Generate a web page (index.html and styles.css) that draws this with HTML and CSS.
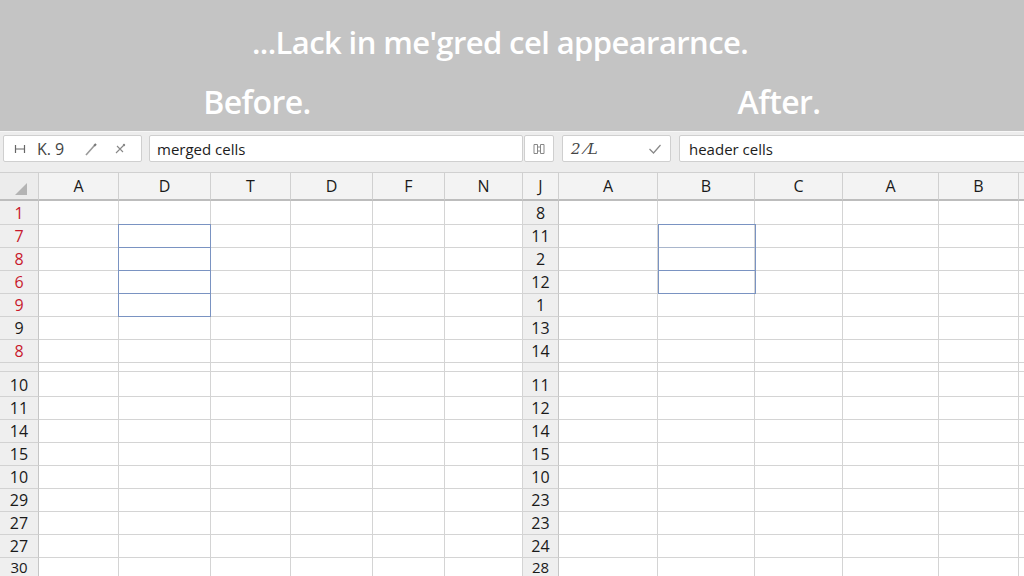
FILE: index.html
```html
<!DOCTYPE html>
<html>
<head>
<meta charset="utf-8">
<link rel="stylesheet" href="styles.css">
</head>
<body>
<div class="banner">
  <div class="title">...Lack in me'gred cel appeararnce.</div>
  <div class="labels"><span class="lbl before">Before.</span><span class="lbl after">After.</span></div>
</div>
<div class="toolbar">
  <div class="box b1">
    <svg class="ic" width="12" height="12" viewBox="0 0 12 12"><path d="M1.5 2v8M10.5 2v8M1.5 6h9" stroke="#666" stroke-width="1.2" fill="none"/></svg>
    <span class="glyph">K.</span><span class="glyph g9">9</span>
    <svg class="ic pen" width="14" height="14" viewBox="0 0 14 14"><path d="M2 13L10 4" stroke="#999" stroke-width="1.6" fill="none"/><path d="M10 4l2-2" stroke="#777" stroke-width="2.2"/></svg>
    <svg class="ic x" width="12" height="12" viewBox="0 0 12 12"><path d="M2 10L10 2M3 3l6 6" stroke="#888" stroke-width="1.1" fill="none"/><circle cx="10" cy="2" r="1.2" fill="#888"/></svg>
  </div>
  <div class="box b2">merged cells</div>
  <div class="box b3">
    <svg width="14" height="14" viewBox="0 0 14 14"><path d="M2 2.5h3.5v9H2M12 2.5H8.5v9H12M5.5 5h3M5.5 9h3M2 2.5v9M12 2.5v9" stroke="#888" stroke-width="1" fill="none"/></svg>
  </div>
  <div class="box b4">
    <span class="cur">2 ⁄L</span>
    <svg class="chk" width="14" height="12" viewBox="0 0 14 12"><path d="M1.5 6l4 4L12.5 2" stroke="#888" stroke-width="1.2" fill="none"/></svg>
  </div>
  <div class="box b5">header cells</div>
</div>
<div class="sheets">
  <div class="sheet left">
    <div class="ch corner"><svg width="14" height="14" viewBox="0 0 14 14"><path d="M13 1V13H1Z" fill="#b4b4b4"/></svg></div><div class="ch">A</div><div class="ch">D</div><div class="ch">T</div><div class="ch">D</div><div class="ch">F</div><div class="ch">N</div>
    <div class="rh red">1</div><div></div><div></div><div></div><div></div><div></div><div></div>
    <div class="rh red">7</div><div></div><div></div><div></div><div></div><div></div><div></div>
    <div class="rh red">8</div><div></div><div></div><div></div><div></div><div></div><div></div>
    <div class="rh red">6</div><div></div><div></div><div></div><div></div><div></div><div></div>
    <div class="rh red">9</div><div></div><div></div><div></div><div></div><div></div><div></div>
    <div class="rh">9</div><div></div><div></div><div></div><div></div><div></div><div></div>
    <div class="rh red">8</div><div></div><div></div><div></div><div></div><div></div><div></div>
    <div class="rh"></div><div></div><div></div><div></div><div></div><div></div><div></div>
    <div class="rh tall">10</div><div></div><div></div><div></div><div></div><div></div><div></div>
    <div class="rh">11</div><div></div><div></div><div></div><div></div><div></div><div></div>
    <div class="rh">14</div><div></div><div></div><div></div><div></div><div></div><div></div>
    <div class="rh">15</div><div></div><div></div><div></div><div></div><div></div><div></div>
    <div class="rh">10</div><div></div><div></div><div></div><div></div><div></div><div></div>
    <div class="rh">29</div><div></div><div></div><div></div><div></div><div></div><div></div>
    <div class="rh">27</div><div></div><div></div><div></div><div></div><div></div><div></div>
    <div class="rh">27</div><div></div><div></div><div></div><div></div><div></div><div></div>
    <div class="rh last">30</div><div></div><div></div><div></div><div></div><div></div><div></div>
    <div class="merge m-left"><div></div><div></div><div></div><div></div></div>
  </div>
  <div class="sheet right">
    <div class="ch rhc">J</div><div class="ch">A</div><div class="ch">B</div><div class="ch">C</div><div class="ch">A</div><div class="ch">B</div><div class="ch"></div>
    <div class="rh">8</div><div></div><div></div><div></div><div></div><div></div><div></div>
    <div class="rh">11</div><div></div><div></div><div></div><div></div><div></div><div></div>
    <div class="rh">2</div><div></div><div></div><div></div><div></div><div></div><div></div>
    <div class="rh">12</div><div></div><div></div><div></div><div></div><div></div><div></div>
    <div class="rh">1</div><div></div><div></div><div></div><div></div><div></div><div></div>
    <div class="rh">13</div><div></div><div></div><div></div><div></div><div></div><div></div>
    <div class="rh">14</div><div></div><div></div><div></div><div></div><div></div><div></div>
    <div class="rh"></div><div></div><div></div><div></div><div></div><div></div><div></div>
    <div class="rh tall">11</div><div></div><div></div><div></div><div></div><div></div><div></div>
    <div class="rh">12</div><div></div><div></div><div></div><div></div><div></div><div></div>
    <div class="rh">14</div><div></div><div></div><div></div><div></div><div></div><div></div>
    <div class="rh">15</div><div></div><div></div><div></div><div></div><div></div><div></div>
    <div class="rh">10</div><div></div><div></div><div></div><div></div><div></div><div></div>
    <div class="rh">23</div><div></div><div></div><div></div><div></div><div></div><div></div>
    <div class="rh">23</div><div></div><div></div><div></div><div></div><div></div><div></div>
    <div class="rh">24</div><div></div><div></div><div></div><div></div><div></div><div></div>
    <div class="rh last">28</div><div></div><div></div><div></div><div></div><div></div><div></div>
    <div class="merge m-right"><div></div><div></div><div></div></div>
  </div>
</div>
</body>
</html>
```
FILE: styles.css
```css
html, body {
  margin: 0;
  padding: 0;
}
body {
  width: 1024px;
  height: 576px;
  overflow: hidden;
  background: #ffffff;
  font-family: "Open Sans", "Liberation Sans", sans-serif;
  color: #222;
}
.banner {
  height: 131px;
  background: #c4c4c4;
  color: #ffffff;
  box-sizing: border-box;
  padding-top: 22px;
}
.title {
  text-align: center;
  font-weight: 600;
  font-size: 31px;
  line-height: 40px;
  letter-spacing: -0.6px;
  padding-right: 24px;
}
.labels {
  display: flex;
  margin-top: 20px;
}
.lbl {
  flex: 1;
  text-align: center;
  font-weight: 600;
  font-size: 32px;
  line-height: 40px;
  letter-spacing: -0.6px;
}
.before {
  padding-left: 12px;
}
.after {
  padding-left: 32px;
}
.toolbar {
  height: 41px;
  box-sizing: border-box;
  background: #ededed;
  border-top: 1px solid #f7f7f7;
  padding: 3px 0 0 3px;
  display: flex;
  align-items: flex-start;
}
.box {
  height: 27px;
  box-sizing: border-box;
  background: #fff;
  border: 1px solid #cfcfcf;
  border-radius: 2px;
  display: flex;
  align-items: center;
  font-size: 15px;
  color: #1c1c1c;
  flex-shrink: 0;
}
.b1 {
  width: 139px;
  padding-left: 10px;
  color: #555;
}
.b1 .glyph {
  font-size: 16px;
  color: #444;
}
.b1 .ic {
  margin-right: 11px;
}
.b1 .g9 {
  margin-left: 4px;
  margin-right: 20px;
}
.b1 .pen {
  margin-right: 16px;
}
.b2 {
  margin-left: 7px;
  width: 374px;
  padding-left: 7px;
}
.b3 {
  margin-left: 1px;
  width: 30px;
  justify-content: center;
}
.b4 {
  margin-left: 8px;
  width: 109px;
  padding-left: 8px;
  justify-content: space-between;
  padding-right: 8px;
}
.cur {
  font-family: "DejaVu Serif", serif;
  font-style: italic;
  font-size: 15px;
  color: #444;
}
.b5 {
  margin-left: 8px;
  width: 360px;
  padding-left: 9px;
}
.sheets {
  display: flex;
}
.sheet {
  position: relative;
  display: grid;
  grid-template-rows: 29px 24px repeat(6, 23px) 9px 25px repeat(8, 23px);
}
.left {
  width: 523px;
  grid-template-columns: 39px 80px 92px 80px 82px 72px 78px;
}
.right {
  width: 520px;
  grid-template-columns: 36px 99px 97px 88px 96px 80px 24px;
}
.sheet > div {
  box-sizing: border-box;
  border-right: 1px solid #d4d4d4;
  border-bottom: 1px solid #d4d4d4;
}
.sheet > .ch {
  background: #f3f3f3;
  border-top: 1px solid #d0d0d0;
  border-bottom: 2px solid #bdbdbd;
  border-right: 1px solid #d0d0d0;
  font-size: 16px;
  display: flex;
  align-items: center;
  justify-content: center;
  color: #1a1a1a;
}
.corner {
  justify-content: flex-end !important;
  align-items: flex-end !important;
  padding: 0 10px 3px 0;
  background: #ececec !important;
}
.sheet > .rh {
  background: #efefef;
  border-right: 1px solid #c6c6c6;
  border-bottom: 1px solid #d2d2d2;
  font-size: 16px;
  display: flex;
  align-items: center;
  justify-content: center;
  color: #1a1a1a;
}
.sheet > .tall {
  padding-top: 2px;
}
.sheet > .last {
  align-items: flex-start;
  line-height: 19px;
  font-size: 15px;
}
.sheet > .red {
  color: #c8192c;
}
.sheet > .merge {
  position: absolute;
  border: 1px solid #7a93c2;
  border-bottom: none;
  box-sizing: border-box;
  display: flex;
  flex-direction: column;
}
.merge > div {
  height: 23px;
  box-sizing: border-box;
  border-bottom: 1px solid #7a93c2;
}
.m-left {
  left: 118px;
  top: 52px;
  width: 93px;
  height: 93px;
}
.m-right {
  left: 135px;
  top: 52px;
  width: 98px;
  height: 70px;
}
.m-right > div:first-child {
  border-bottom-color: #a9b6cc;
}
```
